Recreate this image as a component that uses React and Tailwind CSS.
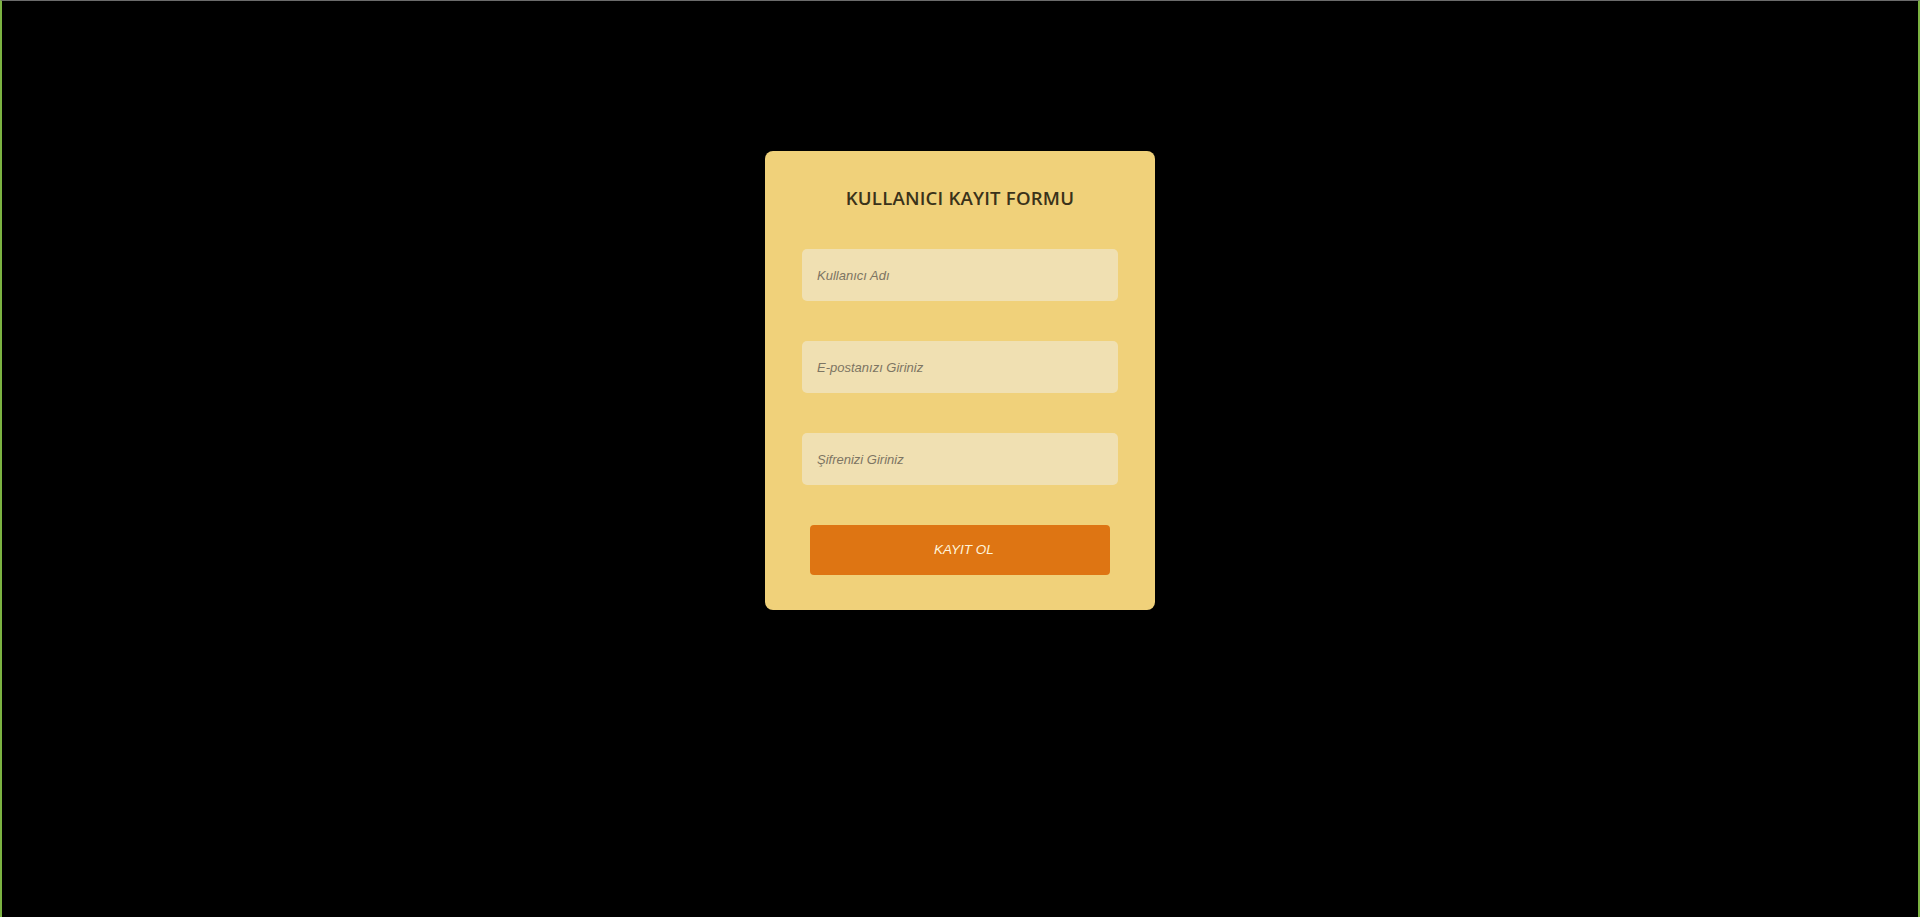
export default function App() {
  return (
    <div className="h-screen w-full bg-black border-l-2 border-r-2 border-t border-l-[#7cb342] border-r-[#7cb342] border-t-[#6b6b6b] box-border overflow-hidden">
      <div className="flex justify-center pt-[150px]">
        <form className="w-[390px] rounded-lg bg-[#f0d17a] px-[37px] pt-[35px] pb-[35px]" onSubmit={(e) => e.preventDefault()}>
          <h2 className="text-center text-[18.6px] font-semibold text-[#3a3219] leading-[24px] tracking-[0.2px] mb-[39px]" style={{ fontFamily: '"Open Sans", sans-serif' }}>
            KULLANICI KAYIT FORMU
          </h2>
          <div className="flex flex-col gap-[40px]" style={{ fontFamily: '"Liberation Sans", Arial, sans-serif' }}>
            <input type="text" placeholder="Kullanıcı Adı" className="h-[52px] w-full rounded-[5px] bg-[#f0e0b2] px-[15px] text-[13px] italic outline-none placeholder:text-[#7d7563]" />
            <input type="email" placeholder="E-postanızı Giriniz" className="h-[52px] w-full rounded-[5px] bg-[#f0e0b2] px-[15px] text-[13px] italic outline-none placeholder:text-[#7d7563]" />
            <input type="password" placeholder="Şifrenizi Giriniz" className="h-[52px] w-full rounded-[5px] bg-[#f0e0b2] px-[15px] text-[13px] italic outline-none placeholder:text-[#7d7563]" />
          </div>
          <div className="px-[8px] mt-[40px]" style={{ fontFamily: '"Liberation Sans", Arial, sans-serif' }}>
            <button type="submit" className="h-[50px] w-full rounded-[4px] bg-[#de7513] pl-[8px] text-[13.5px] font-medium italic text-[#fff3da]">
              KAYIT OL
            </button>
          </div>
        </form>
      </div>
    </div>
  );
}
